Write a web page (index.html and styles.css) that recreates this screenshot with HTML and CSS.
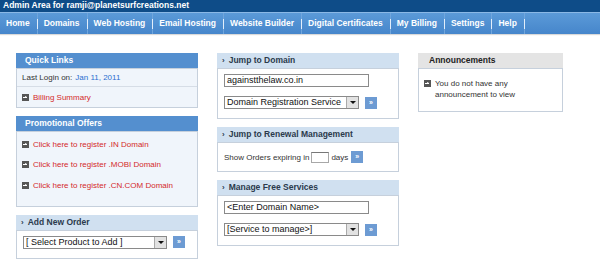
FILE: index.html
```html
<!DOCTYPE html>
<html lang="en">

<head>
  <meta charset="UTF-8">
  <title>Admin Area</title>
  <link rel="stylesheet" href="styles.css">
</head>

<body>
  <div class="top-bar">Admin Area for ramji@planetsurfcreations.net</div>
  <div class="nav-bar">
    <a href="#">Home</a>
    <a href="#">Domains</a>
    <a href="#">Web Hosting</a>
    <a href="#">Email Hosting</a>
    <a href="#">Website Builder</a>
    <a href="#">Digital Certificates</a>
    <a href="#">My Billing</a>
    <a href="#">Settings</a>
    <a href="#">Help</a>
  </div>

  <div class="content">
    <!-- left column -->
    <div class="column col-left">
      <div class="box">
        <div class="box-head blue">Quick Links</div>
        <div class="box-body tint">
          <div class="row bordered">Last Login on: <span class="date">Jan 11, 2011</span></div>
          <div class="row"><span class="bullet"></span><a href="#" class="red">Billing Summary</a></div>
        </div>
      </div>

      <div class="box">
        <div class="box-head blue">Promotional Offers</div>
        <div class="box-body tint promo">
          <div class="row"><span class="bullet"></span><a href="#" class="red">Click here to register .IN Domain</a></div>
          <div class="row"><span class="bullet"></span><a href="#" class="red">Click here to register .MOBI Domain</a></div>
          <div class="row"><span class="bullet"></span><a href="#" class="red">Click here to register .CN.COM Domain</a></div>
        </div>
      </div>

      <div class="box">
        <div class="box-head light">Add New Order</div>
        <div class="box-body form-body">
          <div class="field-row">
            <div class="select wide">[ Select Product to Add ]<span class="arrow"></span></div>
            <span class="go">»</span>
          </div>
        </div>
      </div>
    </div>

    <!-- middle column -->
    <div class="column col-mid">
      <div class="box">
        <div class="box-head light">Jump to Domain</div>
        <div class="box-body form-body">
          <div class="input">againstthelaw.co.in</div>
          <div class="field-row">
            <div class="select">Domain Registration Service<span class="arrow"></span></div>
            <span class="go">»</span>
          </div>
        </div>
      </div>

      <div class="box">
        <div class="box-head light">Jump to Renewal Management</div>
        <div class="box-body renew">
          Show Orders expiring in <span class="days"></span> days <span class="go">»</span>
        </div>
      </div>

      <div class="box">
        <div class="box-head light">Manage Free Services</div>
        <div class="box-body form-body">
          <div class="input">&lt;Enter Domain Name&gt;</div>
          <div class="field-row">
            <div class="select">[Service to manage&gt;]<span class="arrow"></span></div>
            <span class="go">»</span>
          </div>
        </div>
      </div>
    </div>

    <!-- right column -->
    <div class="column col-right">
      <div class="box">
        <div class="box-head gray">Announcements</div>
        <div class="box-body announce">
          <span class="bullet"></span>
          <span>You do not have any<br>announcement to view</span>
        </div>
      </div>
    </div>
  </div>
</body>

</html>
```

FILE: styles.css
```css
* {
  margin: 0;
  padding: 0;
  box-sizing: border-box;
}

body {
  font-family: "Liberation Sans", Arial, sans-serif;
  font-size: 8px;
  color: #333;
  background-color: white;
}

a {
  text-decoration: none;
}

.top-bar {
  background-color: #0e4c88;
  color: white;
  font-weight: bold;
  font-size: 8.5px;
  height: 12px;
  line-height: 11px;
  padding-left: 3px;
}

.nav-bar {
  display: flex;
  height: 22px;
  background: linear-gradient(#5b9ad8, #4686cb);
  border-top: 1px solid #8ab8e6;
  box-shadow: 0 1px 1px rgba(0, 0, 0, 0.15);
}

.nav-bar a {
  position: relative;
  color: white;
  font-weight: bold;
  font-size: 8.5px;
  line-height: 21px;
  padding: 0 7px 0 6px;
  border-right: 1px solid #6fa5dc;
}

.nav-bar a::after {
  content: "";
  position: absolute;
  right: -1px;
  top: 6px;
  height: 10px;
  width: 1px;
  background-color: #e3eefa;
}

.content {
  display: flex;
  align-items: flex-start;
  gap: 19px;
  padding: 19px 0 0 16px;
}

.column {
  display: flex;
  flex-direction: column;
  gap: 8px;
}

.col-left,
.col-mid {
  width: 182px;
}

.col-right {
  width: 145px;
}

.box {
  border: 1px solid #c6d0dc;
}

.box-head {
  height: 15px;
  line-height: 15px;
  font-weight: bold;
  font-size: 8.5px;
}

.box-head.blue {
  background-color: #548fcf;
  color: white;
  padding-left: 9px;
  margin: -1px -1px 0;
}

.box-head.light {
  background-color: #d0e0f0;
  color: #2b3a4c;
  padding-left: 5px;
  margin: -1px -1px 0;
}

.box-head.light::before {
  content: "›";
  margin-right: 4px;
  font-size: 8px;
}

.box-head.gray {
  background-color: #e4e4e4;
  color: #222;
  padding-left: 11px;
  margin: -1px -1px 0;
}

.box-body {
  background-color: white;
  border-top: 1px solid #c6d0dc;
}

.box-body.tint {
  background-color: #f0f5fb;
}

.row {
  display: flex;
  align-items: center;
  height: 20px;
  padding-left: 5px;
}

.row.bordered {
  height: 18px;
  border-bottom: 1px solid #d6dde6;
}

.promo {
  padding: 2px 0 10px;
}

.promo .row {
  height: 20.5px;
}

.date {
  color: #2a6fd0;
  margin-left: 3px;
}

.red {
  color: #d42a2a;
}

.bullet {
  display: inline-block;
  width: 7px;
  height: 7px;
  margin-right: 4px;
  background-color: #555;
  position: relative;
  flex-shrink: 0;
}

.bullet::after {
  content: "";
  position: absolute;
  left: 1px;
  top: 3px;
  width: 4px;
  height: 1px;
  background-color: white;
}

.bullet::before {
  content: "";
  position: absolute;
  left: 3px;
  top: 2px;
  border-left: 2px solid white;
  border-top: 1.5px solid transparent;
  border-bottom: 1.5px solid transparent;
}

.form-body {
  display: flex;
  flex-direction: column;
  gap: 9px;
  padding: 5px 6px 9px;
}

.field-row {
  display: flex;
  align-items: center;
  gap: 6px;
}

.input,
.select {
  font-family: "Liberation Sans", Arial, sans-serif;
  font-size: 9px;
  color: #111;
  height: 13px;
  line-height: 11px;
  border: 1px solid #8a8a8a;
  background-color: white;
  padding-left: 2px;
  white-space: nowrap;
  overflow: hidden;
}

.input {
  width: 145px;
}

.select {
  position: relative;
  width: 135px;
}

.select.wide {
  width: 144px;
}

.select .arrow {
  position: absolute;
  right: 0;
  top: 0;
  width: 12px;
  height: 11px;
  background-color: #e2e2e2;
  border-left: 1px solid #aaa;
}

.select .arrow::after {
  content: "";
  position: absolute;
  left: 3px;
  top: 4px;
  border-top: 3px solid #111;
  border-left: 3px solid transparent;
  border-right: 3px solid transparent;
}

.go {
  display: inline-block;
  width: 12px;
  height: 12px;
  line-height: 11px;
  text-align: center;
  background-color: #6d9bd3;
  color: white;
  font-size: 7px;
  font-weight: bold;
}

.renew {
  display: flex;
  align-items: center;
  height: 29px;
  padding-left: 6px;
}

.days {
  display: inline-block;
  width: 18px;
  height: 11px;
  margin: 0 2px;
  border: 1px solid #a8a8a8;
  border-top-color: #777;
}

.renew .go {
  margin-left: 3px;
}

.announce {
  display: flex;
  align-items: flex-start;
  height: 43px;
  padding: 9px 5px 0;
  line-height: 11px;
  color: #333;
}

.announce .bullet {
  margin-top: 2px;
}
```
